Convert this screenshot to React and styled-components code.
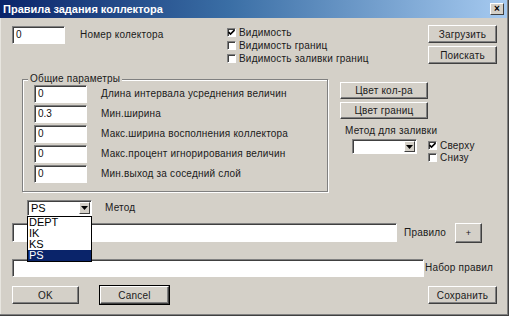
import React from "react";
import styled, { createGlobalStyle } from "styled-components";

const GlobalStyle = createGlobalStyle`
  html, body {
    margin: 0;
    padding: 0;
    background: #d4d0c8;
  }
  body {
    font-family: "Liberation Sans", Arial, sans-serif;
    font-size: 10px;
    letter-spacing: 0.2px;
    color: #1a1a1a;
  }
`;

const Window = styled.div`
  position: relative;
  width: 509px;
  height: 316px;
  box-sizing: border-box;
  background: #d4d0c8;
  box-shadow: inset -1px -1px 0 #404040, inset -2px -2px 0 #808080,
    inset 1px 1px 0 #e8e6e0;
  display: flex;
  flex-direction: column;
  overflow: hidden;
`;

const TitleBar = styled.div`
  height: 18px;
  margin-right: 2px;
  padding-left: 3px;
  display: flex;
  align-items: center;
  justify-content: space-between;
  background: linear-gradient(to right, #0a246a 0%, #3a6ea5 45%, #a6caf0 100%);
  color: #fff;
  font-size: 11px;
  font-weight: bold;
  letter-spacing: 0;
`;

const CloseBox = styled.div`
  width: 14px;
  height: 12px;
  margin-right: 3px;
  box-sizing: border-box;
  background: #d4d0c8;
  border: 1px solid;
  border-color: #fff #404040 #404040 #fff;
  color: #000;
  font-size: 10px;
  font-weight: bold;
  line-height: 9px;
  text-align: center;
`;

const Body = styled.div`
  position: relative;
  display: flex;
  flex-direction: column;
  flex: 1;
`;

const Row = styled.div`
  display: flex;
  align-items: flex-start;
  margin-top: ${(p) => p.$top || 0}px;
  padding-left: ${(p) => p.$left || 0}px;
`;

const Field = styled.div`
  width: ${(p) => p.$w}px;
  height: ${(p) => p.$h || 18}px;
  margin-top: ${(p) => p.$mt || 0}px;
  box-sizing: border-box;
  background: #fff;
  border: 1px solid;
  border-color: #808080 #fff #fff #808080;
  box-shadow: inset 1px 1px 0 #404040;
  padding: 2px 0 0 3px;
  font-size: 10px;
  letter-spacing: 0;
  color: #111;
  flex-shrink: 0;
`;

const Label = styled.div`
  line-height: ${(p) => p.$lh || 18}px;
  margin-left: ${(p) => p.$ml || 0}px;
  margin-top: ${(p) => p.$mt || 0}px;
  width: ${(p) => (p.$w ? `${p.$w}px` : "auto")};
  white-space: nowrap;
  flex-shrink: 0;
`;

const Button = styled.div`
  width: ${(p) => p.$w}px;
  height: ${(p) => p.$h || 18}px;
  margin-left: ${(p) => p.$ml || 0}px;
  box-sizing: border-box;
  background: #d4d0c8;
  border: 1px solid;
  border-color: #fff #404040 #404040 #fff;
  box-shadow: inset -1px -1px 0 #808080;
  outline: ${(p) => (p.$default ? "1px solid #000" : "none")};
  display: flex;
  align-items: center;
  justify-content: center;
  font-size: ${(p) => p.$fs || 10}px;
  color: #1a1a1a;
  flex-shrink: 0;
`;

const Column = styled.div`
  display: flex;
  flex-direction: column;
  gap: ${(p) => p.$gap || 0}px;
  width: ${(p) => (p.$w ? `${p.$w}px` : "auto")};
  margin-top: ${(p) => p.$mt || 0}px;
  margin-left: ${(p) => p.$ml || 0}px;
  flex-shrink: 0;
`;

const CheckRow = styled.label`
  display: flex;
  align-items: center;
  height: ${(p) => p.$h || 13}px;
  gap: 3px;
  white-space: nowrap;
`;

const Box = styled.span`
  width: 9px;
  height: 9px;
  box-sizing: border-box;
  background: #fff;
  border: 1px solid;
  border-color: #808080 #fff #fff #808080;
  box-shadow: inset 1px 1px 0 #404040;
  display: flex;
  align-items: center;
  justify-content: center;
`;

const GroupBox = styled.div`
  position: relative;
  width: 306px;
  height: 113px;
  margin-left: 22px;
  box-sizing: border-box;
  border: 1px solid #808080;
  box-shadow: inset 1px 1px 0 #fff, 1px 1px 0 #fff;
  padding: 5px 0 0 11px;
  display: flex;
  flex-direction: column;
  gap: 2px;
  flex-shrink: 0;
`;

const Legend = styled.div`
  position: absolute;
  top: -7px;
  left: 5px;
  padding: 0 2px;
  background: #d4d0c8;
  line-height: 12px;
`;

const ParamRow = styled.div`
  display: flex;
  align-items: center;
`;

const ComboWrap = styled.div`
  position: relative;
  margin-left: ${(p) => p.$ml || 0}px;
  margin-top: ${(p) => p.$mt || 0}px;
  flex-shrink: 0;
`;

const Combo = styled.div`
  width: ${(p) => p.$w}px;
  height: ${(p) => p.$h}px;
  box-sizing: border-box;
  background: #fff;
  border: 1px solid;
  border-color: #808080 #fff #fff #808080;
  box-shadow: inset 1px 1px 0 #404040;
  display: flex;
  align-items: center;
  justify-content: space-between;
  padding: 1px 1px 1px 3px;
  font-size: 11px;
  letter-spacing: 0;
  color: #000;
`;

const ArrowBtn = styled.div`
  width: 11px;
  height: 100%;
  box-sizing: border-box;
  background: #d4d0c8;
  border: 1px solid;
  border-color: #fff #404040 #404040 #fff;
  display: flex;
  align-items: center;
  justify-content: center;
`;

const DropList = styled.div`
  position: absolute;
  top: 100%;
  left: 0;
  width: 65px;
  box-sizing: border-box;
  background: #fff;
  border: 1px solid #000;
  z-index: 5;
`;

const DropItem = styled.div`
  height: 11px;
  line-height: 11px;
  padding-left: 1px;
  font-size: 11px;
  letter-spacing: 0;
  color: ${(p) => (p.$sel ? "#fff" : "#000")};
  background: ${(p) => (p.$sel ? "#0a246a" : "transparent")};
`;

const Arrow = () => (
  <svg width="7" height="4" viewBox="0 0 7 4">
    <path d="M0 0h7L3.5 4z" fill="#000" />
  </svg>
);

const Check = ({ on }) => (
  <Box>
    {on && (
      <svg width="7" height="7" viewBox="0 0 7 7">
        <path d="M0.5 3l2 2 4-4" stroke="#000" strokeWidth="1.6" fill="none" />
      </svg>
    )}
  </Box>
);

const params = [
  ["0", "Длина интервала усреднения величин"],
  ["0.3", "Мин.ширина"],
  ["0", "Макс.ширина восполнения коллектора"],
  ["0", "Макс.процент игнорирования величин"],
  ["0", "Мин.выход за соседний слой"],
];

export default function App() {
  return (
    <Window>
      <GlobalStyle />
      <TitleBar>
        <span>Правила задания коллектора</span>
        <CloseBox>×</CloseBox>
      </TitleBar>
      <Body>
        <Row $top={7} $left={12}>
          <Row style={{ width: 215 }}>
            <Field $w={53} $mt={1}>0</Field>
            <Label $ml={15} $mt={1}>Номер колектора</Label>
          </Row>
          <Column $w={201} $mt={1}>
            <CheckRow>
              <Check on />
              Видимость
            </CheckRow>
            <CheckRow>
              <Check />
              Видимость границ
            </CheckRow>
            <CheckRow>
              <Check />
              Видимость заливки границ
            </CheckRow>
          </Column>
          <Column $gap={3}>
            <Button $w={69}>Загрузить</Button>
            <Button $w={69}>Поискать</Button>
          </Column>
        </Row>

        <Row $top={14}>
          <GroupBox>
            <Legend>Общие параметры</Legend>
            {params.map(([v, t]) => (
              <ParamRow key={t}>
                <Field $w={53}>{v}</Field>
                <Label $ml={14}>{t}</Label>
              </ParamRow>
            ))}
          </GroupBox>
          <Column $w={88} $ml={12} $mt={3} $gap={3}>
            <Button $w={88} $h={17}>Цвет кол-ра</Button>
            <Button $w={88} $h={17}>Цвет границ</Button>
            <Label $lh={12} $ml={5} $mt={3}>Метод для заливки</Label>
            <ComboWrap $ml={12} $mt={-1}>
              <Combo $w={65} $h={15}>
                <span />
                <ArrowBtn>
                  <Arrow />
                </ArrowBtn>
              </Combo>
            </ComboWrap>
          </Column>
          <Column $mt={60}>
            <CheckRow $h={12}>
              <Check on />
              Сверху
            </CheckRow>
            <CheckRow $h={12}>
              <Check />
              Снизу
            </CheckRow>
          </Column>
        </Row>

        <Row $top={8} $left={27}>
          <ComboWrap>
            <Combo $w={65} $h={16}>
              <span>PS</span>
              <ArrowBtn>
                <Arrow />
              </ArrowBtn>
            </Combo>
            <DropList>
              <DropItem>DEPT</DropItem>
              <DropItem>IK</DropItem>
              <DropItem>KS</DropItem>
              <DropItem $sel>PS</DropItem>
            </DropList>
          </ComboWrap>
          <Label $ml={13} $lh={16}>Метод</Label>
        </Row>

        <Row $top={7} $left={12}>
          <Field $w={385} $h={19} />
          <Label $ml={7} $w={51} $lh={19}>Правило</Label>
          <Button $w={27} $h={20} $fs={9}>+</Button>
        </Row>

        <Row $top={16} $left={12}>
          <Field $w={412} $h={18} />
          <Label $ml={1}>Набор правил</Label>
        </Row>

        <Row $top={9} $left={12}>
          <Button $w={67}>OK</Button>
          <Button $w={69} $ml={21} $default>Cancel</Button>
          <Button $w={69} $ml={259}>Сохранить</Button>
        </Row>
      </Body>
    </Window>
  );
}
